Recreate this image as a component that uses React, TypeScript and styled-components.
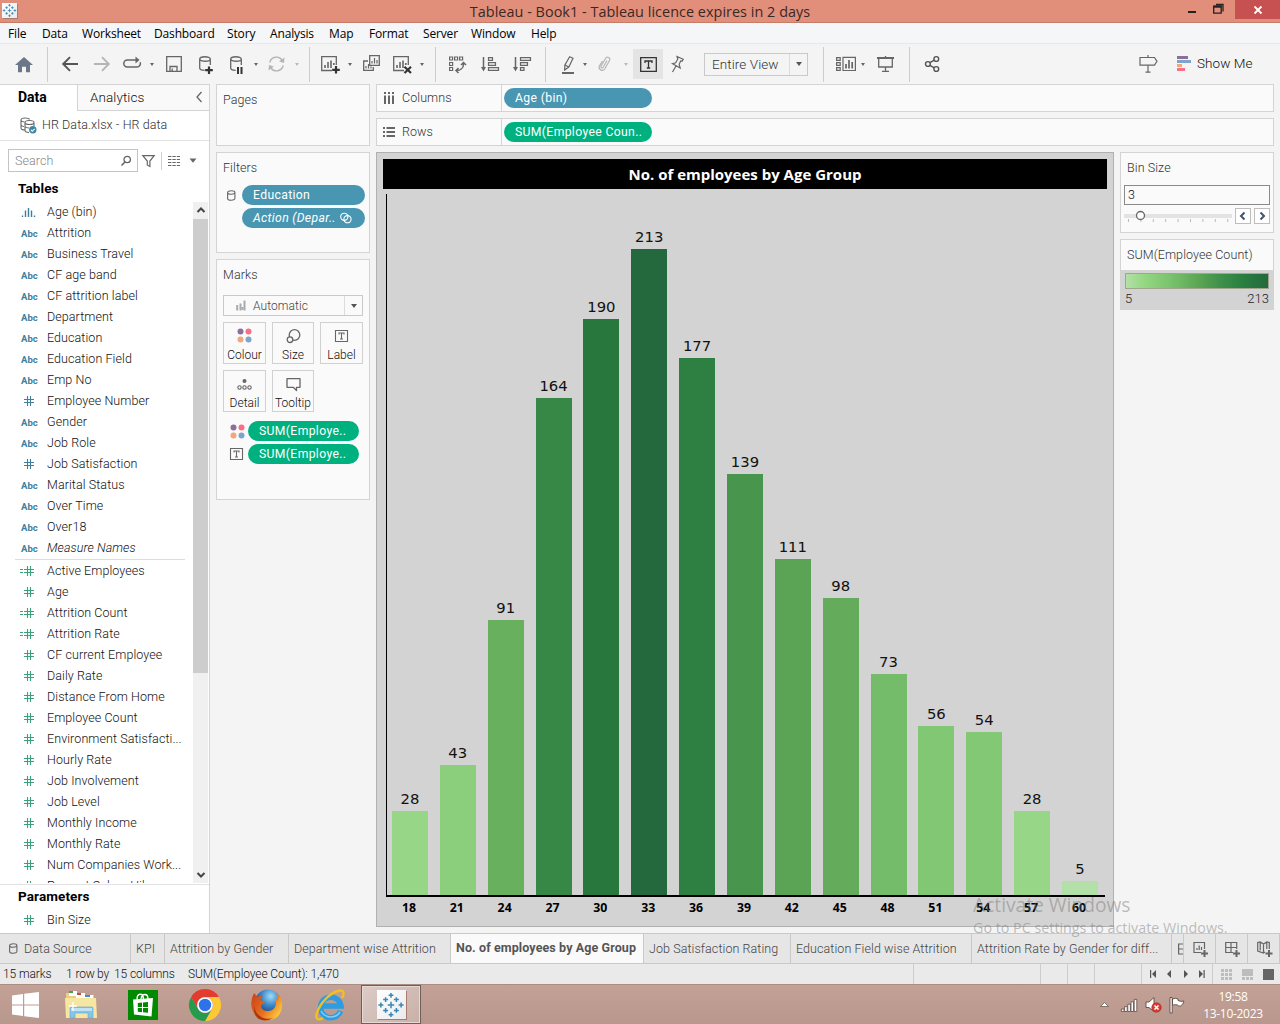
import React from "react";
import styled, { createGlobalStyle, css } from "styled-components";

const ui = `Roboto, "Open Sans", sans-serif`;
const segoe = `"Open Sans", "Noto Sans", sans-serif`;

const Global = createGlobalStyle`
  *, *::before, *::after { box-sizing: border-box; }
  body { margin: 0; background: #f4f4f4; overflow: hidden; }
  svg { display: block; flex: none; overflow: visible; }
`;

const Page = styled.div`
  width: 1280px;
  height: 1024px;
  display: flex;
  flex-direction: column;
  background: #f4f4f4;
  font: 300 12.5px/16px ${ui};
  letter-spacing: 0.08px;
  color: #111;
  position: relative;
  overflow: hidden;
  white-space: nowrap;
`;

/* ---------- title bar and menu ---------- */

const TitleBar = styled.header`
  height: 23px;
  flex: none;
  display: flex;
  background: #e18f7b;
  border-bottom: 1px solid #c57c69;
`;
const AppBadge = styled.div<{ $size: number }>`
  width: ${(p) => p.$size}px;
  height: ${(p) => p.$size}px;
  display: grid;
  place-items: center;
  background: linear-gradient(135deg, #ffffff, #e9eaec);
  box-shadow: 1px 1px 0 #a77b70;
`;
const TitleLeft = styled.div`
  width: 140px;
  padding: 3px 0 0 2px;
`;
const TitleText = styled.div`
  flex: 1;
  text-align: center;
  font: 400 14.4px/23px ${segoe};
  letter-spacing: 0.04px;
  color: #3a2824;
`;
const WindowButtons = styled.div`
  width: 140px;
  display: flex;
  justify-content: flex-end;
`;
const CloseButton = styled.div`
  width: 45px;
  height: 19px;
  background: #c75050;
  display: grid;
  place-items: center;
`;
const MenuBar = styled.nav`
  height: 21px;
  flex: none;
  display: flex;
  padding-left: 8px;
  background: #f5f6f7;
  border-bottom: 1px solid #e8e8e8;
  font: 400 12px/22px ${segoe};
  color: #000;
`;
const MenuItem = styled.span<{ $w: number }>`
  width: ${(p) => p.$w}px;
  letter-spacing: -0.15px;
`;

/* ---------- toolbar ---------- */

const Toolbar = styled.div`
  height: 40px;
  flex: none;
  display: flex;
  align-items: center;
`;
const Slot = styled.div<{ $gap: number }>`
  margin-left: ${(p) => p.$gap}px;
  flex: none;
`;
const Separator = styled.div<{ $gap: number }>`
  width: 1px;
  height: 35px;
  margin-left: ${(p) => p.$gap}px;
  background: #cdcdcd;
  flex: none;
`;
const Caret = styled.div<{ $gap: number; $off?: boolean }>`
  margin-left: ${(p) => p.$gap}px;
  border: solid transparent;
  border-width: 3px 2.5px 0;
  border-top-color: ${(p) => (p.$off ? "#b9b9b9" : "#666")};
  flex: none;
`;
const ActiveTool = styled.div`
  width: 30px;
  height: 30px;
  margin-left: 5px;
  display: grid;
  place-items: center;
  background: #e4e4e4;
  flex: none;
`;
const FitSelect = styled.div`
  width: 104px;
  height: 23px;
  margin-left: 20px;
  border: 1px solid #c9c9c9;
  display: flex;
  align-items: center;
  font-size: 13.5px;
  line-height: 19px;
  color: #333;
  padding-left: 7px;
  flex: none;
`;
const DropArrow = styled.div`
  width: 18px;
  height: 100%;
  margin-left: auto;
  border-left: 1px solid #dcdcdc;
  display: grid;
  place-items: center;
  &::after {
    content: "";
    border: solid transparent;
    border-width: 4px 3.5px 0;
    border-top-color: #555;
  }
`;
const ShowMe = styled.span`
  margin: 0 0 2px 6px;
  font-size: 13.5px;
`;

/* ---------- body ---------- */

const Body = styled.main`
  height: 849px;
  flex: none;
  display: flex;
`;
const Sidebar = styled.aside`
  width: 210px;
  flex: none;
  background: #fff;
  border-top: 1px solid #d4d4d4;
  border-right: 1px solid #d4d4d4;
  display: flex;
  flex-direction: column;
`;
const PaneTabs = styled.div`
  height: 26px;
  display: flex;
  font-size: 14px;
  line-height: 25px;
  flex: none;
`;
const PaneTab = styled.div<{ $active?: boolean }>`
  ${(p) =>
    p.$active
      ? css`
          width: 77px;
          padding-left: 18px;
          font-weight: 700;
          letter-spacing: 0;
          color: #000;
        `
      : css`
          flex: 1;
          display: flex;
          justify-content: space-between;
          padding: 0 7px 0 12px;
          background: #f9f9f9;
          border-left: 1px solid #d4d4d4;
          border-bottom: 1px solid #d4d4d4;
          font-size: 13.5px;
        `}
`;
const SourceRow = styled.div`
  height: 30px;
  flex: none;
  display: flex;
  align-items: center;
  gap: 5px;
  padding: 0 0 1px 20px;
  border-bottom: 1px solid #e2e2e2;
  color: #333;
`;
const SearchRow = styled.div`
  display: flex;
  align-items: center;
  flex: none;
  padding: 8px 0 0 8px;
  height: 31px;
`;
const SearchBox = styled.div`
  width: 130px;
  height: 23px;
  border: 1px solid #c4c4c4;
  display: flex;
  align-items: center;
  justify-content: space-between;
  padding: 0 5px 0 6px;
  color: #888;
`;
const ViewDivider = styled.div`
  width: 1px;
  height: 18px;
  margin: 0 6px;
  background: #cfcfcf;
`;
const Heading = styled.h2`
  margin: 0;
  padding-left: 18px;
  height: 30px;
  flex: none;
  font: 700 13.5px/33px ${ui};
  letter-spacing: 0.1px;
  color: #000;
`;
const FieldArea = styled.div`
  height: 681px;
  flex: none;
  display: flex;
`;
const FieldList = styled.div`
  flex: 1;
  margin-top: -1px;
  overflow: hidden;
`;
const FieldRow = styled.div<{ $italic?: boolean }>`
  height: 21px;
  display: flex;
  align-items: center;
  font-style: ${(p) => (p.$italic ? "italic" : "normal")};
`;
const FieldIcon = styled.span`
  width: 47px;
  flex: none;
  display: flex;
  padding-left: 19px;
`;
const AbcTag = styled.span`
  padding: 1px 0 0 2px;
  font: 700 9.5px/15px ${ui};
  letter-spacing: 0;
  font-style: normal;
  color: #3d7f9c;
`;
const ListRule = styled.div`
  height: 1px;
  margin: 1px 8px 0 15px;
  background: #dcdcdc;
`;
const ScrollTrack = styled.div`
  width: 16px;
  background: #f0f0f0;
  border-right: 1px solid #fff;
  display: flex;
  flex-direction: column;
  justify-content: space-between;
  align-items: center;
  padding: 0 0 3px;
`;
const ScrollThumb = styled.div`
  width: 15px;
  height: 454px;
  margin-bottom: auto;
  background: #cdcdcd;
`;
const ScrollButton = styled.div`
  height: 17px;
  padding-bottom: 1px;
  display: grid;
  place-items: center;
`;
const Parameters = styled.div`
  border-top: 1px solid #e2e2e2;
  margin-top: 1px;
`;
const ParamHeading = styled(Heading)`
  height: 24px;
  line-height: 23px;
`;

/* ---------- shelves ---------- */

const Shelves = styled.div`
  width: 154px;
  margin-left: 6px;
  flex: none;
  display: flex;
  flex-direction: column;
  gap: 6px;
`;
const Card = styled.section<{ $h: number }>`
  height: ${(p) => p.$h}px;
  flex: none;
  background: #fafafa;
  border: 1px solid #d4d4d4;
  padding: 7px 6px;
`;
const CardTitle = styled.div`
  color: #333;
  height: 18px;
`;
const PillRow = styled.div<{ $pad: number }>`
  display: flex;
  align-items: center;
  justify-content: space-between;
  height: 20px;
  margin-bottom: 3px;
  padding-left: ${(p) => p.$pad}px;
`;
const Pill = styled.div<{ $w: number; $green?: boolean; $italic?: boolean }>`
  width: ${(p) => p.$w}px;
  height: 20px;
  border-radius: 10px;
  background: ${(p) => (p.$green ? "#00b180" : "#4996b2")};
  color: #fff;
  font-weight: 400;
  font-size: 12.2px;
  letter-spacing: 0.35px;
  font-style: ${(p) => (p.$italic ? "italic" : "normal")};
  display: flex;
  align-items: center;
  gap: 4px;
  padding-left: 11px;
`;
const FilterPills = styled.div`
  margin: 7px -2px 0 0;
`;
const MarkPills = styled.div`
  margin: 9px 4px 0 0;
`;
const MarkSelect = styled.div`
  height: 21px;
  margin-top: 10px;
  border: 1px solid #c9c9c9;
  display: flex;
  align-items: center;
  gap: 7px;
  padding-left: 12px;
  font-size: 12px;
  color: #444;
`;
const MarkGrid = styled.div`
  display: grid;
  grid-template-columns: 43px 42px 43px;
  grid-auto-rows: 42px;
  gap: 6px;
  margin-top: 6px;
`;
const MarkButton = styled.div`
  border: 1px solid #d0d0d0;
  display: flex;
  flex-direction: column;
  align-items: center;
  justify-content: space-between;
  padding: 5px 0 0;
  font-size: 12px;
  letter-spacing: 0;
`;

/* ---------- worksheet ---------- */

const Workspace = styled.div`
  width: 898px;
  margin-left: 6px;
  display: flex;
  flex-direction: column;
  gap: 6px;
`;
const Shelf = styled.div`
  height: 28px;
  flex: none;
  display: flex;
  align-items: center;
  border: 1px solid #d4d4d4;
  background: #fafafa;
`;
const ShelfLabel = styled.div`
  width: 125px;
  height: 100%;
  margin-right: 2px;
  padding-left: 6px;
  border-right: 1px solid #d4d4d4;
  display: flex;
  align-items: center;
  gap: 7px;
  color: #333;
`;
const SheetRow = styled.div`
  display: flex;
  gap: 6px;
`;
const Sheet = styled.section`
  width: 738px;
  height: 775px;
  border: 1px solid #b0b0b0;
  background: #d3d3d3;
  padding: 6px;
`;
const SheetTitle = styled.div`
  height: 30px;
  background: #000;
  color: #fff;
  text-align: center;
  font: 700 15px/30px ${segoe};
  letter-spacing: 0;
`;
const Plot = styled.div`
  width: 719px;
  height: 703px;
  margin: 5px 0 0 3px;
  border-left: 1px solid #000;
  border-bottom: 2px solid #000;
  display: flex;
`;
const Column = styled.div`
  width: 47.87px;
  flex: none;
  display: flex;
  flex-direction: column;
  justify-content: flex-end;
  align-items: center;
  &:first-child {
    margin-left: -1px;
  }
`;
const BarValue = styled.div`
  font: 400 14.8px/20px "DejaVu Sans", sans-serif;
  letter-spacing: 0;
  margin-bottom: 2px;
`;
const Bar = styled.div`
  width: 36px;
  flex: none;
`;
const Axis = styled.div`
  display: flex;
  padding-left: 2px;
`;
const AxisLabel = styled.div`
  width: 47.87px;
  flex: none;
  text-align: center;
  font: 700 12.3px/22px "Noto Sans", sans-serif;
  letter-spacing: 0;
  color: #000;
`;
const SideCards = styled.div`
  width: 154px;
  display: flex;
  flex-direction: column;
  gap: 6px;
`;
const NumberInput = styled.div`
  height: 20px;
  margin: 7px -3px 0;
  padding: 1px 3px;
  border: 1px solid #8a8a8a;
`;
const SliderRow = styled.div`
  display: flex;
  align-items: center;
  gap: 3px;
  margin: 3px -3px 0;
`;
const StepButton = styled.div`
  width: 16px;
  height: 16px;
  border: 1px solid #bdbdbd;
  background: #fff;
  display: grid;
  place-items: center;
`;
const LegendBody = styled.div`
  height: 40px;
  margin: 5px -7px 0;
  padding: 3px 5px 0 5px;
  background: #d3d3d3;
`;
const Ramp = styled.div`
  height: 16px;
  border: 1px solid #a2a58e;
  background: linear-gradient(90deg, #b3e0a6, #96d884 12%, #7cc46f 30%, #5aa453 52%, #3f914b 66%, #2a7f40 82%, #24693d);
`;
const RampScale = styled.div`
  display: flex;
  justify-content: space-between;
  line-height: 20px;
  font-size: 13px;
  color: #222;
`;

/* ---------- sheet tabs, status, taskbar ---------- */

const SheetTabs = styled.div`
  height: 31px;
  flex: none;
  display: flex;
  border-top: 1px solid #c9c9c9;
  border-bottom: 1px solid #c9c9c9;
  background: #e6e6e6;
`;
const SheetTab = styled.div<{ $w: number; $active?: boolean }>`
  width: ${(p) => p.$w}px;
  flex: none;
  overflow: hidden;
  display: flex;
  align-items: center;
  gap: 6px;
  padding-left: 5px;
  border-right: 1px solid #c9c9c9;
  color: #444;
  ${(p) =>
    p.$active &&
    css`
      background: #fafafa;
      font-weight: 700;
      letter-spacing: 0.1px;
      padding-bottom: 2px;
      color: #555;
    `}
`;
const NewTab = styled.div`
  width: 32px;
  flex: none;
  padding-left: 2px;
  border-right: 1px solid #c9c9c9;
  display: grid;
  place-items: center;
`;
const StatusBar = styled.div`
  height: 20px;
  flex: none;
  display: flex;
  align-items: center;
  padding-left: 3px;
  background: #eaeaea;
  font-size: 12px;
  letter-spacing: -0.1px;
`;
const StatusText = styled.span<{ $w: number }>`
  width: ${(p) => p.$w}px;
  flex: none;
`;
const StatusCell = styled.div<{ $w: number }>`
  width: ${(p) => p.$w}px;
  height: 100%;
  flex: none;
  border-left: 1px solid #cdcdcd;
  display: flex;
  align-items: center;
  padding-left: 8px;
`;
const Taskbar = styled.footer`
  height: 40px;
  flex: none;
  display: flex;
  align-items: center;
  background: linear-gradient(#c4a197, #b8978c);
  border-top: 1px solid #a98d83;
`;
const TaskItem = styled.div<{ $w: number; $active?: boolean }>`
  width: ${(p) => p.$w}px;
  height: 39px;
  flex: none;
  display: grid;
  place-items: center;
  ${(p) =>
    p.$active &&
    css`
      border: 1px solid #6f5f5a;
      background: linear-gradient(135deg, #dccbc6, #c9b0a8);
      box-shadow: inset 0 0 0 1px #e6d8d4;
    `}
`;
const Tray = styled.div`
  margin-left: auto;
  display: flex;
  align-items: center;
`;
const Clock = styled.div`
  width: 62px;
  margin: 0 16px 0 16px;
  text-align: center;
  font: 400 12px/17px ${segoe};
  letter-spacing: -0.3px;
  color: #fff;
`;
const Watermark = styled.div`
  position: absolute;
  left: 973px;
  top: 892px;
  color: rgba(120, 120, 120, 0.48);
  font: 400 14.3px/20px ${segoe};
  letter-spacing: 0;
`;
const WatermarkTitle = styled.div`
  font-size: 19.2px;
  line-height: 26px;
`;

/* ---------- drawings ---------- */

const S = "#666";

const Svg = ({ w, h = 20, children, ...rest }: { w: number; h?: number; children: React.ReactNode } & React.SVGProps<SVGSVGElement>) => (
  <svg width={w} height={h} viewBox={`0 0 ${w} ${h}`} fill="none" stroke={S} strokeWidth={1.3} {...rest}>
    {children}
  </svg>
);

const logoCrosses: [number, number, number][] = [
  [0, 0, 3], [-5, -5, 2.3], [5, -5, 2.3], [-5, 5, 2.3], [5, 5, 2.3],
  [-9.4, 0, 2.3], [9.4, 0, 2.3], [0, -9, 2.2], [0, 9, 2.2],
];
const TableauLogo = ({ size }: { size: number }) => (
  <svg width={size} height={size} viewBox="-13 -13 26 26" stroke="#3a86b4" strokeWidth={1.400}>
    {logoCrosses.map(([x, y, r]) => (
      <path key={`${x},${y}`} d={`M${x - r} ${y}h${2 * r}M${x} ${y - r}v${2 * r}`} />
    ))}
  </svg>
);

const Home = () => (
  <Svg w={18} stroke="none">
    <path d="M9 3l9 8h-3v7.300h-4v-5.500H7v5.500H3V11H0z" fill="#6c7889" />
  </Svg>
);
const Arrow = ({ flip, color }: { flip?: boolean; color: string }) => (
  <Svg w={16} stroke={color} strokeWidth={1.9}>
    <path d="M16 10H1.200M8 3.200L1.200 10 8 16.800" transform={flip ? "matrix(-1 0 0 1 16 0)" : undefined} />
  </Svg>
);
const Redo = () => (
  <Svg w={18} strokeWidth={1.5}>
    <path d="M13 6H4.300a3.500 3.500 0 0 0 0 7H14a3.500 3.500 0 0 0 3.200-4.700" />
    <path d="M12.500 2.500L16.500 6l-4 3.500z" fill={S} stroke="none" />
  </Svg>
);
const Save = () => (
  <Svg w={16}>
    <path d="M.700 2.700h14.600v14.600H.700zM4 17v-4.500h7V17M6.200 17v-2.500" />
  </Svg>
);
const Cylinder = () => <path d="M.700 5v9c0 1.500 2.200 2.300 5 2.300M11.300 5v6M.700 5c0-3 10.600-3 10.600 0S.700 8 .700 5z" />;
const AddSource = () => (
  <Svg w={14}>
    <Cylinder />
    <path d="M10 12.500v7.500M6.200 16.200h7.600" strokeWidth={2.2} stroke="#333" />
  </Svg>
);
const PauseSource = () => (
  <Svg w={13}>
    <Cylinder />
    <path d="M8 13v7M11.500 13v7" strokeWidth={2} stroke="#333" />
  </Svg>
);
const Refresh = () => (
  <Svg w={17} stroke="#b5b5b5" strokeWidth={1.400}>
    <path d="M1.800 8.500A6.800 6.800 0 0 1 14 6M15.200 11.500A6.800 6.800 0 0 1 3 14" />
    <path d="M16.500 3.500L16 9l-4.800-1.600zM.500 16.500L1 11l4.800 1.600z" fill="#b5b5b5" stroke="none" />
  </Svg>
);
const NewSheet = ({ cross }: { cross?: boolean }) => (
  <Svg w={19}>
    <path d="M11 16.500H.700V2.700h14.600V11" />
    <path d="M4 14v-3M7 14V8M10 14V6.500M12.800 11V9" strokeWidth={1.600} />
    {cross ? (
      <path d="M11.500 12.700l6.500 6.300M18 12.700L11.500 19" stroke="#333" strokeWidth={2.2} />
    ) : (
      <path d="M15 12v7.500M11.200 15.800h7.600" stroke="#333" strokeWidth={2.2} />
    )}
  </Svg>
);
const Duplicate = () => (
  <Svg w={17}>
    <path d="M6.700 1.700h9.600v9.600H6.700zM5 7H.700v9.300h9.600V13" />
    <path d="M9 9.500V7M11.500 9.500V4M14 9.500V6M3 14.500V12M5.500 14.500V10M8 14.500v-2" strokeWidth={1.200} />
  </Svg>
);
const Swap = () => (
  <Svg w={17} strokeWidth={1.200}>
    <path d="M.600 3h3v3h-3zM5.600 3h3v3h-3zM10.600 3h3v3h-3zM.600 8.500h3v3h-3zM.600 13.500h3v3h-3z" />
    <path d="M14.500 10c0 4-3 6.500-7 6.500M12 11l2.500-2.500L17 11M9.500 14L7 16.500 9.500 19" strokeWidth={1.500} />
  </Svg>
);
const SortIcon = ({ desc }: { desc?: boolean }) => (
  <Svg w={18}>
    <path d="M2.500 3v12" strokeWidth={1.500} />
    <path d="M0 13h5l-2.500 4.500z" fill={S} stroke="none" />
    <path
      d={
        desc
          ? "M7.500 3.600h10v2.700h-10zM7.500 8.600h7v2.700h-7zM7.500 13.600h3.500v2.700H7.500z"
          : "M7.500 3.600h4v2.700h-4zM7.500 8.600h7v2.700h-7zM7.500 13.600h10v2.700h-10z"
      }
      strokeWidth={1.200}
    />
  </Svg>
);
const Highlighter = () => (
  <Svg w={12}>
    <path d="M0 19h12" strokeWidth={2} />
    <path d="M7.700 2.800l3.300 1.400L6.800 13 2.600 16l.3-5zM3 11l3.700 2" strokeWidth={1.200} />
  </Svg>
);
const Clip = () => (
  <Svg w={13} stroke="#b5b5b5" strokeWidth={1.200}>
    <path d="M9 6.500L5.300 13c-1 1.700-3 .5-2.200-1L7.500 4.500c1.700-2.600 5.300-.6 4 2L7 14.500c-2.300 3.800-7.300.8-5.500-2.600L4.500 7" />
  </Svg>
);
const TextBox = () => (
  <Svg w={17} h={15} stroke="#333">
    <path d="M.700.700h15.600v13.600H.700zM5 6V4h7v2M8.500 4v7M6.800 11h3.400" />
  </Svg>
);
const Pin = () => (
  <Svg w={13} strokeWidth={1.200}>
    <path d="M6 2.500l6.200 2.800-1 1.700-1.500-.2-1.500 3.500 1 3.700L1.500 9.700l3.200-1L6.800 5zM5 12L1.500 18" />
  </Svg>
);
const Cells = () => (
  <Svg w={20} strokeWidth={1.200}>
    <path d="M.600 3.600h3.600v2.800H.600zM.600 8.600h3.600v2.800H.600zM.600 13.600h3.600v2.800H.600zM7 3.300h12.400v13.200H7z" />
    <path d="M10 14.500V10M13 14.500V6M16.200 14.500V8" strokeWidth={1.700} />
  </Svg>
);
const Present = () => (
  <Svg w={17}>
    <path d="M0 4h17" strokeWidth={2} />
    <path d="M1.700 4v9h13.600V4M8.500 13v4M5 17.300h7M8.500 2v2" />
  </Svg>
);
const Share = () => (
  <Svg w={15} stroke="#555" strokeWidth={1.400}>
    <circle cx="11.300" cy="5" r="2.400" />
    <circle cx="2.900" cy="10" r="2.400" />
    <circle cx="11.300" cy="15" r="2.400" />
    <path d="M5 8.700l4.200-2.500M5 11.300l4.200 2.500" />
  </Svg>
);
const Guide = () => (
  <Svg w={19} strokeWidth={1.200}>
    <path d="M1 3.500h14.500l2.500 3.800-2.500 3.800H1zM9 1v2.500M9 11v7M6.500 18.200h5" />
  </Svg>
);
const ShowMeBars = () => (
  <Svg w={14} stroke="none">
    <path d="M0 2h11v3H0z" fill="#8b7199" />
    <path d="M0 6h14v3H0z" fill="#7ea3cc" />
    <path d="M0 10h5v3H0z" fill="#f2a679" />
    <path d="M0 14h8v3H0z" fill="#fb6f84" />
  </Svg>
);
const Dots = () => (
  <Svg w={15} h={15} stroke="none">
    <circle cx="3.500" cy="3.500" r="3" fill="#8b7199" />
    <circle cx="11.500" cy="3.500" r="3" fill="#fb6f84" />
    <circle cx="3.500" cy="11.500" r="3" fill="#f2a679" />
    <circle cx="11.500" cy="11.500" r="3" fill="#7ea3cc" />
  </Svg>
);
const Hash = ({ color, calc }: { color: string; calc?: boolean }) => (
  <Svg w={16} h={12} stroke={color} strokeWidth={1.100}>
    <path d="M5 4.500h10M5 7.500h10M8.500 1v10M11.500 1v10" />
    {calc && <path d="M1 4.500h3M1 7.500h3" />}
  </Svg>
);
const BinIcon = () => (
  <Svg w={16} h={12} stroke="#3d7f9c" strokeWidth={1.400}>
    <path d="M3.500 11V9.500M6.500 11V4.500M9.500 11V2M12.500 11V4.500M15.500 11V9.500" />
  </Svg>
);
const SmallCylinder = () => (
  <Svg w={9} h={11} strokeWidth={1.100}>
    <path d="M.600 2.500v6c0 2.300 7.300 2.300 7.300 0v-6c0-2.300-7.300-2.300-7.300 0s7.300 2.300 7.300 0" />
  </Svg>
);
const Chevron = ({ d, color = "#444", w = 1.500 }: { d: string; color?: string; w?: number }) => (
  <Svg w={10} h={10} stroke={color} strokeWidth={w}>
    <path d={d} />
  </Svg>
);

const Slider = () => (
  <Svg w={108} h={16} stroke="none">
    <path d="M0 6h108v4H0z" fill="#e3e3e3" />
    {Array.from({ length: 9 }, (_, i) => (
      <path key={i} d={`M${4 + i * 12.400} 11v3h1v-3z`} fill="#bbb" />
    ))}
    <circle cx="16.500" cy="7.500" r="4" fill="#fff" stroke="#666" strokeWidth={1.300} />
  </Svg>
);

const StartFlag = () => (
  <Svg w={27} h={26} stroke="none">
    <path d="M0 3.500L11 2v10.500H0zM12.200 1.800L27 0v12.500H12.200zM0 13.500h11V24L0 22.500zM12.200 13.500H27V26l-14.800-1.800z" fill="#fff" />
  </Svg>
);
const Explorer = () => (
  <Svg w={32} h={29} stroke="none">
    <path d="M1 3h9l2 2h17v22H1z" fill="#e9cf7c" />
    <path d="M4 1h8v5H4z" fill="#fff" />
    <path d="M4 1h4v2H4z" fill="#3aa655" />
    <path d="M11 3h9v5h-9z" fill="#fff" />
    <path d="M12 3h4v2h-4z" fill="#cc4a33" />
    <path d="M18 5h10v5H18z" fill="#fff" />
    <path d="M20 5h5v2h-5z" fill="#3b8fd0" />
    <path d="M0 8h31l1 20H1z" fill="#f7e6a2" />
    <path d="M5 28V18q0-1 1-1h21q1 0 1 1v10h-5v-5H10v5z" fill="#86c5e8" stroke="#5fa8d2" strokeWidth={0.600} />
    <path d="M6 18h21v3H6z" fill="#bfe3f6" />
    <path d="M8 12v9M4 16h8" stroke="#fff" />
  </Svg>
);
const Store = () => (
  <Svg w={30} h={30} stroke="none">
    <path d="M0 0h30v30H0z" fill="#008a00" />
    <path d="M5 9.500l20-1.500-1.500 18.500L6 24.500z" fill="#fff" />
    <path d="M9 9.500c0-7 6-7 6.500-.5M13 9c1-6 7-6 7 0" stroke="#fff" strokeWidth={1.400} />
    <path d="M9.800 13l4.200-.5V17H9.800zM15 12.400l5-.5V17h-5zM9.800 18H14v4.200l-4.200-.4zM15 18h5v4.800l-5-.5z" fill="#008a00" />
  </Svg>
);
const Chrome = () => (
  <svg width="32" height="32" viewBox="-16 -16 32 32">
    <path d="M-13.860-8A16 16 0 0 1 13.860-8L0-8A8 8 0 0 0-6.930 4z" fill="#e33b2e" />
    <path d="M13.860-8A16 16 0 0 1 0 16L6.930 4A8 8 0 0 0 0-8z" fill="#fcc934" />
    <path d="M0 16A16 16 0 0 1-13.860-8L-6.930 4A8 8 0 0 0 6.930 4z" fill="#259b4b" />
    <circle r="7.800" fill="#fff" />
    <circle r="6.200" fill="#2d72e8" />
  </svg>
);
const Firefox = () => (
  <svg width="32" height="32" viewBox="-16 -16 32 32">
    <defs>
      <radialGradient id="globe" cx="0.6" cy="0.25" r="0.7">
        <stop offset="0" stopColor="#9fdcf7" />
        <stop offset="0.5" stopColor="#3a86c8" />
        <stop offset="1" stopColor="#1c3f86" />
      </radialGradient>
      <linearGradient id="fox" x1="0" y1="0" x2="1" y2="0.6">
        <stop offset="0" stopColor="#c8401a" />
        <stop offset="0.6" stopColor="#e8701f" />
        <stop offset="1" stopColor="#fbc63c" />
      </linearGradient>
    </defs>
    <circle cx="1" cy="-2" r="13.500" fill="url(#globe)" />
    <path
      d="M-13-12q2 2 3 4 3-2 6-1-3 2-3 4 2 1 5 1 0 2-4 4 0 6 7 6 5 0 7-4 2-5 0-9 2 1 3 3 0-5-2-8 7 4 6 14-2 13-15 13.500-10 0-14-9-4-9 1-18.500z"
      fill="url(#fox)"
    />
    <path d="M-13 0q1 9 8 12.500 6 2.500 12 0-8 5-15 1.500-6-4-5-14z" fill="#a93512" />
  </svg>
);
const InternetExplorer = () => (
  <svg width="32" height="32" viewBox="-16 -16 32 32" fill="none">
    <path d="M10.500 6A10.300 10.300 0 1 1 11 1H-7" stroke="#2b9de0" strokeWidth="5.500" />
    <path d="M10 7A11 11 0 0 1-9 6" stroke="#7fd0f7" strokeWidth="1.500" />
    <path d="M12-7c3-5 2-9-4-7C0-12-10-2-13 8c-2 6 1 8 6 5" stroke="#f2c021" strokeWidth="2.400" />
  </svg>
);

const Signal = () => (
  <Svg w={16} h={14} stroke="#5d4a45" strokeWidth={0.800}>
    {[0, 1, 2, 3, 4].map((i) => (
      <path key={i} d={`M${i * 3.2 + 0.4} ${11 - i * 2.4}h2.600v${2.500 + i * 2.400}h-2.600z`} fill="#fff" />
    ))}
  </Svg>
);
const Volume = () => (
  <Svg w={17} h={16} stroke="#5d4a45" strokeWidth={0.900}>
    <path d="M1 5h3l5-4.500v14L4 10.500H1z" fill="#fff" />
    <circle cx="11.500" cy="10.500" r="4.600" fill="#e03a32" stroke="#b32720" />
    <path d="M9.500 8.500l4 4M13.500 8.500l-4 4" stroke="#fff" strokeWidth={1.500} />
  </Svg>
);
const Flag = () => (
  <Svg w={17} h={16} stroke="#5d4a45" strokeWidth={0.900}>
    <path d="M1 .500h2.200V16H1zM3.500 2q3-1.500 5.500 0v1.500q3 1.500 6 .5-1 4-3.500 5-2 .5-3-1-2-.8-5 .2z" fill="#fff" />
  </Svg>
);

/* ---------- data ---------- */

const menus: [string, number][] = [
  ["File", 34], ["Data", 40], ["Worksheet", 72], ["Dashboard", 73], ["Story", 43], ["Analysis", 59],
  ["Map", 40], ["Format", 54], ["Server", 48], ["Window", 60], ["Help", 40],
];
const dimensions = [
  "Attrition", "Business Travel", "CF age band", "CF attrition label", "Department", "Education",
  "Education Field", "Emp No", "Employee Number", "Gender", "Job Role", "Job Satisfaction",
  "Marital Status", "Over Time", "Over18", "Measure Names",
];
const numericDimensions = ["Employee Number", "Job Satisfaction"];
const measures = [
  "Active Employees", "Age", "Attrition Count", "Attrition Rate", "CF current Employee", "Daily Rate",
  "Distance From Home", "Employee Count", "Environment Satisfacti...", "Hourly Rate", "Job Involvement",
  "Job Level", "Monthly Income", "Monthly Rate", "Num Companies Work...", "Percent Salary Hike",
];
const calculated = ["Active Employees", "Attrition Count", "Attrition Rate"];
const bars: [number, number, string][] = [
  [18, 28, "#98d687"], [21, 43, "#8bcf7c"], [24, 91, "#68b05d"], [27, 164, "#378847"], [30, 190, "#28773d"],
  [33, 213, "#24693d"], [36, 177, "#2d8042"], [39, 139, "#48964e"], [42, 111, "#5ba455"], [45, 98, "#64ac5b"],
  [48, 73, "#74bc69"], [51, 56, "#82c874"], [54, 54, "#82c875"], [57, 28, "#98d687"], [60, 5, "#b3e0a6"],
];
const barHeight = (count: number) => Math.floor(count * 3.0365 - 0.45);
const sheets: [string, number][] = [
  ["KPI", 34], ["Attrition by Gender", 124], ["Department wise Attrition", 162], ["No. of employees by Age Group", 193],
  ["Job Satisfaction Rating", 147], ["Education Field wise Attrition", 181], ["Attrition Rate by Gender for diff...", 200],
];

const ToolbarRow = () => (
  <Toolbar>
    <Slot $gap={15}><Home /></Slot>
    <Separator $gap={14} />
    <Slot $gap={14}><Arrow color="#555" /></Slot>
    <Slot $gap={16}><Arrow flip color="#b5b5b5" /></Slot>
    <Slot $gap={13}><Redo /></Slot>
    <Caret $gap={9} />
    <Slot $gap={12}><Save /></Slot>
    <Slot $gap={17}><AddSource /></Slot>
    <Slot $gap={17}><PauseSource /></Slot>
    <Caret $gap={11} />
    <Slot $gap={10}><Refresh /></Slot>
    <Caret $gap={10} $off />
    <Separator $gap={10} />
    <Slot $gap={11}><NewSheet /></Slot>
    <Caret $gap={8} />
    <Slot $gap={11}><Duplicate /></Slot>
    <Slot $gap={13}><NewSheet cross /></Slot>
    <Caret $gap={8} />
    <Separator $gap={11} />
    <Slot $gap={13}><Swap /></Slot>
    <Slot $gap={15}><SortIcon /></Slot>
    <Slot $gap={14}><SortIcon desc /></Slot>
    <Separator $gap={14} />
    <Slot $gap={16}><Highlighter /></Slot>
    <Caret $gap={9} />
    <Slot $gap={11}><Clip /></Slot>
    <Caret $gap={13} $off />
    <ActiveTool><TextBox /></ActiveTool>
    <Slot $gap={8}><Pin /></Slot>
    <FitSelect>Entire View<DropArrow /></FitSelect>
    <Separator $gap={15} />
    <Slot $gap={12}><Cells /></Slot>
    <Caret $gap={5} />
    <Slot $gap={12}><Present /></Slot>
    <Separator $gap={15} />
    <Slot $gap={15}><Share /></Slot>
    <Slot $gap={199}><Guide /></Slot>
    <Slot $gap={19}><ShowMeBars /></Slot>
    <ShowMe>Show Me</ShowMe>
  </Toolbar>
);

const DataPane = () => (
  <Sidebar>
    <PaneTabs>
      <PaneTab $active>Data</PaneTab>
      <PaneTab>
        Analytics
        <Svg w={6} h={24}><path d="M5.500 7L1 12l4.500 5" /></Svg>
      </PaneTab>
    </PaneTabs>
    <SourceRow>
      <Svg w={17} h={17} strokeWidth={1.100}>
        <path d="M5 13q-4 0-4-2V3q0-2 4-2t4.500 1.500M1 3.500q1 1.500 3.500 1.500M1 8q1 1.500 3 1.500" />
        <path d="M5 5.500q0-2 4.500-2t4.500 2-4.500 2-4.500-2V13q0 2.500 4 2.500M14 5.500V9M5 9.500q1 1.500 4 1.500" />
        <circle cx="12.800" cy="12.800" r="3.700" fill="#3b87a5" stroke="none" />
        <path d="M11 13l1.300 1.300 2.300-2.500" stroke="#fff" />
      </Svg>
      HR Data.xlsx - HR data
    </SourceRow>
    <SearchRow>
      <SearchBox>
        Search
        <Svg w={12} h={12}><circle cx="7.200" cy="4.500" r="3.200" /><path d="M5 7L1.500 10.500" strokeWidth={1.600} /></Svg>
      </SearchBox>
      <Slot $gap={4}><Svg w={13} h={12} strokeWidth={1.200}><path d="M.800.700h11.400L7.900 6v5.500L5.300 10V6z" /></Svg></Slot>
      <ViewDivider />
      <Svg w={12} h={10} strokeWidth={1.200} strokeDasharray="3.400 1">
        <path d="M0 .500h12M0 3.500h12M0 6.500h12M0 9.500h12" />
      </Svg>
      <Slot $gap={9}><Svg w={8} h={5} stroke="none"><path d="M.500.500h7L4 4.800z" fill={S} /></Svg></Slot>
    </SearchRow>
    <Heading>Tables</Heading>
    <FieldArea>
      <FieldList>
        <FieldRow><FieldIcon><BinIcon /></FieldIcon>Age (bin)</FieldRow>
        {dimensions.map((name) => (
          <FieldRow key={name} $italic={name === "Measure Names"}>
            <FieldIcon>
              {numericDimensions.includes(name) ? <Hash color="#3d7f9c" /> : <AbcTag>Abc</AbcTag>}
            </FieldIcon>
            {name}
          </FieldRow>
        ))}
        <ListRule />
        {measures.map((name) => (
          <FieldRow key={name}>
            <FieldIcon><Hash color="#3aa27b" calc={calculated.includes(name)} /></FieldIcon>
            {name}
          </FieldRow>
        ))}
      </FieldList>
      <ScrollTrack>
        <ScrollButton><Chevron d="M1.500 7L5 3.500 8.500 7" w={2} /></ScrollButton>
        <ScrollThumb />
        <Chevron d="M1.500 3L5 6.500 8.500 3" w={2} />
      </ScrollTrack>
    </FieldArea>
    <Parameters>
      <ParamHeading>Parameters</ParamHeading>
      <FieldRow><FieldIcon><Hash color="#3aa27b" /></FieldIcon>Bin Size</FieldRow>
    </Parameters>
  </Sidebar>
);

const ShelfColumn = () => (
  <Shelves>
    <Card $h={62}><CardTitle>Pages</CardTitle></Card>
    <Card $h={101}>
      <CardTitle>Filters</CardTitle>
      <FilterPills>
        <PillRow $pad={4}><SmallCylinder /><Pill $w={123}>Education</Pill></PillRow>
        <PillRow $pad={19}>
          <Pill $w={123} $italic>
            Action (Depar..
            <Svg w={12} h={12} stroke="#fff" strokeWidth={1.100}>
              <circle cx="4.300" cy="4.800" r="3.600" /><circle cx="7.500" cy="7.200" r="3.600" />
            </Svg>
          </Pill>
        </PillRow>
      </FilterPills>
    </Card>
    <Card $h={241}>
      <CardTitle>Marks</CardTitle>
      <MarkSelect>
        <Svg w={10} h={11} strokeWidth={2} stroke="#aaa"><path d="M1.200 10.500V5M4.500 10.500V3.500M8.500 10.500V.500" /><path d="M6.500 10V7" /></Svg>
        Automatic
        <DropArrow />
      </MarkSelect>
      <MarkGrid>
        <MarkButton><Dots />Colour</MarkButton>
        <MarkButton>
          <Svg w={15} h={16}><circle cx="8.500" cy="7" r="5.300" /><circle cx="4" cy="11.700" r="2.800" fill="#fafafa" /></Svg>
          Size
        </MarkButton>
        <MarkButton><Svg w={13} h={16} strokeWidth={1.100}><path d="M.500 2.500h12v11H.500zM4 6.500V5h5v1.500M6.500 5v6M5 11h3" /></Svg>Label</MarkButton>
        <MarkButton>
          <Svg w={15} h={16} strokeWidth={1.100}>
            <circle cx="7.500" cy="5" r="2" fill={S} stroke="none" />
            <circle cx="2.500" cy="11.500" r="1.700" /><circle cx="7.500" cy="11.500" r="1.700" /><circle cx="12.500" cy="11.500" r="1.700" />
          </Svg>
          Detail
        </MarkButton>
        <MarkButton><Svg w={15} h={16}><path d="M1 2.700h13v8.600h-3.500v3.200L7.200 11.300H1z" strokeLinejoin="round" /></Svg>Tooltip</MarkButton>
      </MarkGrid>
      <MarkPills>
        <PillRow $pad={7}><Dots /><Pill $w={111} $green>SUM(Employe..</Pill></PillRow>
        <PillRow $pad={7}><Svg w={13} h={12} strokeWidth={1.100}><path d="M.500.500h12v11H.500zM4 4.500V3h5v1.500M6.500 3v6M5 9h3" /></Svg><Pill $w={111} $green>SUM(Employe..</Pill></PillRow>
      </MarkPills>
    </Card>
  </Shelves>
);

const Worksheet = () => (
  <Workspace>
    <Shelf>
      <ShelfLabel>
        <Svg w={12} h={12} strokeWidth={2}><path d="M2 3.500V12M6 3.500V12M10 3.500V12M2 0v2M6 0v2M10 0v2" /></Svg>
        Columns
      </ShelfLabel>
      <Pill $w={148}>Age (bin)</Pill>
    </Shelf>
    <Shelf>
      <ShelfLabel>
        <Svg w={12} h={12} strokeWidth={1.800}><path d="M3.500 2H12M3.500 6H12M3.500 10H12M0 2h2M0 6h2M0 10h2" /></Svg>
        Rows
      </ShelfLabel>
      <Pill $w={148} $green>SUM(Employee Coun..</Pill>
    </Shelf>
    <SheetRow>
      <Sheet>
        <SheetTitle>No. of employees by Age Group</SheetTitle>
        <Plot>
          {bars.map(([age, count, color]) => (
            <Column key={age}>
              <BarValue>{count}</BarValue>
              <Bar style={{ height: barHeight(count), background: color }} />
            </Column>
          ))}
        </Plot>
        <Axis>
          {bars.map(([age]) => <AxisLabel key={age}>{age}</AxisLabel>)}
        </Axis>
      </Sheet>
      <SideCards>
        <Card $h={81}>
          <CardTitle>Bin Size</CardTitle>
          <NumberInput>3</NumberInput>
          <SliderRow>
            <Slider />
            <StepButton><Chevron d="M6.500 1.500L3 5l3.500 3.500" color="#44546a" w={2} /></StepButton>
            <StepButton><Chevron d="M3.500 1.500L7 5 3.500 8.500" color="#44546a" w={2} /></StepButton>
          </SliderRow>
        </Card>
        <Card $h={71}>
          <CardTitle>SUM(Employee Count)</CardTitle>
          <LegendBody>
            <Ramp />
            <RampScale><span>5</span><span>213</span></RampScale>
          </LegendBody>
        </Card>
      </SideCards>
    </SheetRow>
  </Workspace>
);

export default function App() {
  return (
    <Page>
      <Global />
      <TitleBar>
        <TitleLeft><AppBadge $size={15}><TableauLogo size={15} /></AppBadge></TitleLeft>
        <TitleText>Tableau - Book1 - Tableau licence expires in 2 days</TitleText>
        <WindowButtons>
          <Svg w={47} h={20} stroke="#222">
            <path d="M0 12h8" strokeWidth={2} />
            <path d="M25.700 6.200h7.500v7h-7.500zM28 4.500h7v7" />
            <path d="M25.500 6.700h8" strokeWidth={2} />
          </Svg>
          <CloseButton><Chevron d="M1.500 1.500l7 7M8.500 1.500l-7 7" color="#fff" w={1.800} /></CloseButton>
        </WindowButtons>
      </TitleBar>
      <MenuBar>{menus.map(([name, w]) => <MenuItem key={name} $w={w}>{name}</MenuItem>)}</MenuBar>
      <ToolbarRow />
      <Body>
        <DataPane />
        <ShelfColumn />
        <Worksheet />
      </Body>
      <SheetTabs>
        <SheetTab $w={131}><Slot $gap={4}><SmallCylinder /></Slot>Data Source</SheetTab>
        {sheets.map(([name, w], i) => <SheetTab key={name} $w={w} $active={i === 3}>{name}</SheetTab>)}
        <SheetTab $w={12}>
          <Svg w={8} h={12} strokeWidth={1.200}><path d="M8 1H1.600v10H8M1.600 6H8" /></Svg>
        </SheetTab>
        <NewTab><Svg w={15} h={16} strokeWidth={1.200}><path d="M8 11.500H1V1.500h10.500V8M4 9V7M6.200 9V4.500M8.500 9V6" /><path d="M11.500 9v7M8 12.500h7" strokeWidth={2} /></Svg></NewTab>
        <NewTab><Svg w={15} h={16} strokeWidth={1.200}><path d="M8 11.500H.700V1.500h11V8M.700 6.500h11M6 1.500v10" /><path d="M11.500 9v7M8 12.500h7" strokeWidth={2} /></Svg></NewTab>
        <NewTab><Svg w={15} h={16} strokeWidth={1.200}><path d="M8 11L6.500 12 .700 10V1.500l2.500-.500 3.300 2 3.300-2 2.500.500V8M3.200 1v8.500M6.500 3v9M9.800 1v7" /><path d="M12 9v7M8.500 12.500h7" strokeWidth={2} /></Svg></NewTab>
      </SheetTabs>
      <StatusBar>
        <StatusText $w={63}>15 marks</StatusText>
        <StatusText $w={31}>1 row</StatusText>
        <StatusText $w={17}>by</StatusText>
        <StatusText $w={74}>15 columns</StatusText>
        <StatusText $w={725}>SUM(Employee Count): 1,470</StatusText>
        <StatusCell $w={127} />
        <StatusCell $w={27} />
        <StatusCell $w={27} />
        <StatusCell $w={47} />
        <StatusCell $w={71}>
          <Svg w={56} h={8} stroke="none">
            <path d="M0 0h1.200v8H0zM6 0v8L2 4zM21 0v8l-4-4zM34 0l4 4-4 4zM49 0l4 4-4 4zM53.500 0h1.200v8h-1.200z" fill="#555" />
          </Svg>
        </StatusCell>
        <StatusCell $w={68}>
          <Svg w={54} h={11} stroke="none">
            <path d="M0 0h3v3H0zM4 0h3v3H4zM8 0h3v3H8zM0 4h3v3H0zM4 4h3v3H4zM8 4h3v3H8zM0 8h3v3H0zM4 8h3v3H4zM8 8h3v3H8zM21 0h11v7H21zM21 8h3v3h-3zM25 8h3v3h-3zM29 8h3v3h-3z" fill="#bdbdbd" />
            <path d="M42 0h11v11H42z" fill="#666" />
          </Svg>
        </StatusCell>
      </StatusBar>
      <Taskbar>
        <TaskItem $w={50}><StartFlag /></TaskItem>
        <TaskItem $w={62}><Explorer /></TaskItem>
        <TaskItem $w={62}><Store /></TaskItem>
        <TaskItem $w={62}><Chrome /></TaskItem>
        <TaskItem $w={62}><Firefox /></TaskItem>
        <TaskItem $w={63}><InternetExplorer /></TaskItem>
        <TaskItem $w={60} $active><AppBadge $size={29}><TableauLogo size={28} /></AppBadge></TaskItem>
        <Tray>
          <Svg w={9} h={6} stroke="#5d4a45" strokeWidth={0.700}><path d="M.500 4.500l4-4 4 4z" fill="#fff" /></Svg>
          <Slot $gap={12}><Signal /></Slot>
          <Slot $gap={8}><Volume /></Slot>
          <Slot $gap={7}><Flag /></Slot>
          <Clock>19:58<br />13-10-2023</Clock>
        </Tray>
      </Taskbar>
      <Watermark>
        <WatermarkTitle>Activate Windows</WatermarkTitle>
        Go to PC settings to activate Windows.
      </Watermark>
    </Page>
  );
}
